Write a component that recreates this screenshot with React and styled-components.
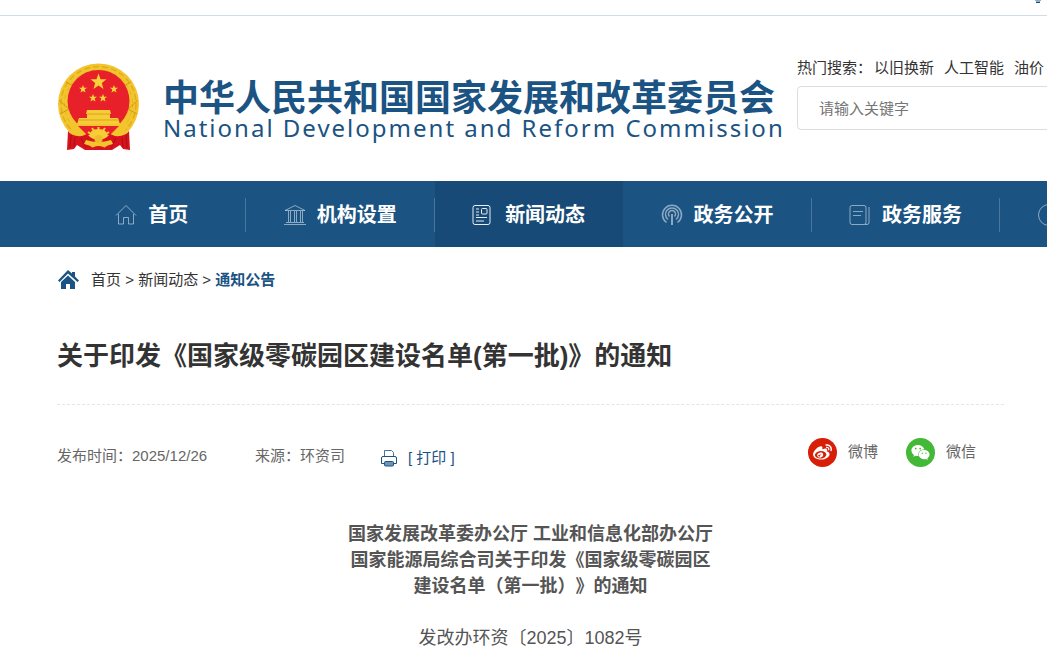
import React from 'react'
import styled, {createGlobalStyle} from "styled-components"
import {FaWeibo, FaWeixin} from "react-icons/fa"


const hotWords = ["以旧换新", "人工智能", "油价"]

const smallStars = [[26, 27], [57, 27], [36, 36], [46, 36]]

const Emblem = () => (
	<svg width="84" height="92" viewBox="0 0 84 92" role="img" aria-label="国徽">
		<circle cx="41.500" cy="42" r="40.500" fill="#f3c52c"/>
		<circle cx="41.500" cy="42" r="37.500" fill="none" stroke="#dfac22" strokeWidth="1.500" strokeDasharray="6 3"/>
		<circle cx="41.500" cy="42" r="34" fill="none" stroke="#e2b32a" strokeDasharray="4 4"/>
		<path d="M2 38 L13 48 M3 52 L12 47 M81 38 L70 48 M80 52 L71 47 M9 20 L18 25 M74 20 L65 25" stroke="#cf981c"/>
		<circle cx="41.500" cy="39" r="31" fill="#e8202a"/>
		<path fill="#f7d23a" d="M41.500 11.500 L43.500 17.200 L49.500 17.300 L44.800 21 L46.500 27 L41.500 23.500 L36.500 27 L38.200 21 L33.500 17.300 L39.500 17.200Z"/>
		{smallStars.map(([x, y]) => (
			<path key={`${x}-${y}`} transform={`translate(${x} ${y})`} fill="#f7d23a" d="M0 -4 L1.100 -1.300 L4 -1.200 L1.700 .6 L2.500 3.500 L0 1.900 L-2.500 3.500 L-1.700 .6 L-4 -1.200 L-1.100 -1.300Z"/>
		))}
		<path fill="#f6cd36" d="M30 48h23l1 4h-1v4h8l2 6H20l2-6h8v-4h-1z"/>
		<path stroke="#d9a322" d="M30 52h23M21 58h41"/>
		<path fill="#f3c52c" d="M13 62h57l-3 14H16z"/>
		<path fill="#e8202a" d="M21 64h41l-9 9H30z"/>
		<path fill="#f6cd36" d="M32 76q0-9 9.500-9t9.500 9z"/>
		<path stroke="#f6cd36" strokeWidth="2" d="M31 70l3 2M35 66l2 3M41.500 65v3M48 66l-2 3M52 70l-3 2"/>
		<path fill="#d8131d" d="M11 69q4 6 14 5l5-2q5 6 11.500 6t11.500-6l5 2q10 1 14-5l1 19-7-1-3-4-8 5H28l-8-5-3 4-7 1z"/>
		<path stroke="#a90f18" fill="none" d="M14 73l-1 13M18 75l-1 10M69 73l1 13M65 75l1 10M24 76l5 10M59 76l-5 10"/>
		<path fill="#f3c52c" d="M29 78q12.500 4 25 0l2 4q-6 1-9 4H36q-3-3-9-4z"/>
		<path fill="#d8131d" d="M32 88q9.500-8 19 0z"/>
		<circle cx="41.500" cy="77" r="4" fill="#efbd2b"/>
	</svg>
)

const HomeLineIcon = () => (
	<NavSvg>
		<path d="M1 11.500 L11 1.500 L21 11.500 M3.500 10v10h5v-6.500h5V20h5V10"/>
	</NavSvg>
)

const BankIcon = () => (
	<NavSvg>
		<path d="M1 6.500 L11 1.500 L21 6.500zM0 20.500h22M2 18.500h18M4.500 7v11M6.500 7v11M10.500 7v11M12.500 7v11M16.500 7v11M18.500 7v11"/>
	</NavSvg>
)

const NewsIcon = () => (
	<NavSvg $bright>
		<rect x="1" y="1.500" width="17" height="19" rx="2"/>
		<rect x="9.500" y="4.500" width="5.500" height="5.500" rx="1"/>
		<path d="M4 5h3M4 8h3M4 11h3M4 13.500h11M4 17h8"/>
	</NavSvg>
)

const SignalIcon = () => (
	<NavSvg>
		<path strokeWidth="1.500" d="M5.500 18.500a9.500 9.500 0 1 1 11 0M7 15.500a6.500 6.500 0 1 1 8 0M8.500 12.500a3.500 3.500 0 1 1 5 0"/>
		<path strokeWidth="2" d="M11 10v11"/>
	</NavSvg>
)

const PaperIcon = () => (
	<NavSvg>
		<rect x="1" y="1.500" width="16" height="19" rx="2"/>
		<path d="M4 7.500h10M4 11.500h8M16 20.500h2q2 0 2-2V3"/>
	</NavSvg>
)

const ChatIcon = () => (
	<NavSvg>
		<circle cx="11" cy="11" r="10.500"/>
	</NavSvg>
)

const navItems = [
	{title: "首页", icon: <HomeLineIcon/>},
	{title: "机构设置", icon: <BankIcon/>},
	{title: "新闻动态", icon: <NewsIcon/>, active: true},
	{title: "政务公开", icon: <SignalIcon/>},
	{title: "政务服务", icon: <PaperIcon/>},
	{title: "互动交流", icon: <ChatIcon/>, iconOnly: true},
]

function NavSvg({children, $bright}) {
	return (
		<svg width="22" height="22" viewBox="0 0 22 22" fill="none" stroke="#fff" strokeOpacity={$bright ? .9 : .5} aria-hidden="true">
			{children}
		</svg>
	)
}

const App = () => {
	return (
		<>
			<GlobalStyle/>
			<TopBar>
				<svg width="6" height="3" viewBox="0 0 6 3" aria-hidden="true">
					<path d="M0 0h6v1H0z" fill="#8fafc9"/>
					<path d="M1 1.500h4V3H1z" fill="#1b5383"/>
				</svg>
			</TopBar>
			<Header>
				<Logo href="#">
					<Emblem/>
					<LogoText>
						<strong>中华人民共和国国家发展和改革委员会</strong>
						<span lang="en">National Development and Reform Commission</span>
					</LogoText>
				</Logo>
				<Search>
					<HotWords>
						<span>热门搜索：</span>
						{hotWords.map((word) => <a href="#" key={word}>{word}</a>)}
					</HotWords>
					<input type="text" placeholder="请输入关键字" aria-label="请输入关键字"/>
				</Search>
			</Header>
			<Nav>
				<ul>
					{navItems.map(({title, icon, active, iconOnly}) => (
						<NavItem key={title} $active={active} $iconOnly={iconOnly}>
							<a href="#" aria-label={title}>{icon}{!iconOnly && <span>{title}</span>}</a>
						</NavItem>
					))}
				</ul>
			</Nav>
			<Main>
				<Breadcrumb>
					<svg width="22" height="20" viewBox="0 0 22 20" fill="#1b5383" aria-hidden="true">
						<path d="M11 0 L15 3.500V2h3v4.500l4 4-1.500 1.500L11 3.500 2.500 12 1 10.500z"/>
						<path d="M4 12 L11 5.500l7 6.500v7h-5v-5H9v5H4z"/>
					</svg>
					<p>
						<a href="#">首页</a> &gt; <a href="#">新闻动态</a> &gt; <a href="#" className="current">通知公告</a>
					</p>
				</Breadcrumb>
				<Title>关于印发《国家级零碳园区建设名单(第一批)》的通知</Title>
				<Meta>
					<Published>发布时间：2025/12/26</Published>
					<span>来源：环资司</span>
					<PrintButton type="button">
						<svg width="18" height="18" viewBox="0 0 18 18" fill="none" stroke="#1b5383" aria-hidden="true">
							<path d="M4.500 8V1.500h7l2 2V8" strokeOpacity=".8"/>
							<path d="M4 14.500H1.500V9q0-1.500 1.500-1.500h12q1.500 0 1.500 1.500v5.500H14"/>
							<rect x="4.500" y="12.500" width="9" height="4.500" rx="1" fill="#6f93b3"/>
						</svg>
						<span>[ 打印 ]</span>
					</PrintButton>
					<Share>
						<ShareLink href="#" $color="#d81e06">
							<i><FaWeibo/></i>微博
						</ShareLink>
						<ShareLink href="#" $color="#44b837">
							<i><FaWeixin/></i>微信
						</ShareLink>
					</Share>
				</Meta>
				<Article>
					<h2>
						国家发展改革委办公厅 工业和信息化部办公厅<br/>
						国家能源局综合司关于印发《国家级零碳园区<br/>
						建设名单（第一批）》的通知
					</h2>
					<p>发改办环资〔2025〕1082号</p>
				</Article>
			</Main>
		</>
	)
}

export default App

const GlobalStyle = createGlobalStyle`
  * {
    box-sizing: border-box;
    margin: 0;
    padding: 0;
  }

  body {
    background: #fff;
    color: #333;
    font-family: "Liberation Sans", "Noto Sans CJK SC", sans-serif;
    font-size: 15px;
    line-height: 24px;
    text-spacing-trim: space-all;
    overflow-x: hidden;
  }

  a {
    color: inherit;
    text-decoration: none;
  }

  svg {
    display: block;
    flex: none;
  }
`

const TopBar = styled.div`
  display: flex;
  justify-content: flex-end;
  height: 16px;
  padding-right: 6px;
  border-bottom: 1px solid #d1dde6;
`

const Header = styled.header`
  display: flex;
  gap: 20px;
  height: 165px;
  padding-left: 57px;
  overflow: hidden;
`

const Logo = styled.a`
  display: flex;
  flex: none;
  gap: 22px;
  padding-top: 46px;
  color: #1b5383;
`

const LogoText = styled.div`
  display: flex;
  flex-direction: column;
  width: 614px;
  padding-top: 20px;
  white-space: nowrap;

  strong {
    font-size: 36px;
    line-height: 34px;
  }

  span {
    font-family: "Noto Sans", sans-serif;
    font-size: 24px;
    line-height: 24px;
    letter-spacing: 2px;
  }
`

const Search = styled.div`
  flex: 1 0 320px;
  padding-top: 40px;

  input {
    width: 100%;
    height: 44px;
    margin-top: 6px;
    padding: 0 21px;
    border: 1px solid #ddd;
    border-radius: 4px;
    font: inherit;
  }

  input::placeholder {
    color: #757575;
  }
`

const HotWords = styled.div`
  display: flex;
  gap: 10px;
  white-space: nowrap;

  span {
    margin-right: -8px;
  }
`

const Nav = styled.nav`
  background: #1b5383;
  padding-left: 58px;
  overflow: hidden;

  ul {
    display: grid;
    grid-template-columns: repeat(6, 18vw);
    list-style: none;
  }
`

const NavItem = styled.li`
  padding: 17px 0 15px;
  background: ${({$active}) => $active ? "#174a76" : "transparent"};

  a {
    display: flex;
    align-items: center;
    justify-content: ${({$iconOnly}) => $iconOnly ? "flex-start" : "center"};
    gap: 11px;
    height: 34px;
    padding-left: ${({$iconOnly}) => $iconOnly ? "38px" : "0"};
    border-right: 1px solid ${({$active}) => $active ? "transparent" : "#4a769c"};
    color: #fff;
    font-size: 20px;
    font-weight: bold;
    white-space: nowrap;
  }
`

const Main = styled.main`
  padding: 20px 43px 0 57px;
`

const Breadcrumb = styled.div`
  display: flex;
  align-items: center;
  gap: 12px;
  height: 26px;

  .current {
    color: #1b5383;
    font-weight: bold;
  }
`

const Title = styled.h1`
  padding: 43px 0 28px;
  border-bottom: 1px dashed #e5e5e5;
  font-size: 26px;
  line-height: 40px;
`

const Meta = styled.div`
  display: flex;
  align-items: center;
  height: 40px;
  margin-top: 31px;
  color: #666;
`

const Published = styled.span`
  width: 198px;
`

const PrintButton = styled.button`
  display: flex;
  align-items: center;
  gap: 10px;
  margin-left: 35px;
  padding-top: 3px;
  border: none;
  background: none;
  color: #1b5383;
  font: inherit;
  cursor: pointer;
`

const Share = styled.div`
  display: flex;
  gap: 28px;
  margin-left: auto;
  padding: 0 28px 8px 0;
`

const ShareLink = styled.a`
  display: flex;
  align-items: center;
  gap: 11px;

  i {
    display: flex;
    align-items: center;
    justify-content: center;
    width: 29px;
    height: 29px;
    border-radius: 50%;
    background: ${({$color}) => $color};
    color: #fff;
    font-size: 19px;
  }
`

const Article = styled.article`
  margin-top: 45px;
  color: #555;
  font-size: 18px;
  line-height: 26px;
  text-align: center;

  h2 {
    font-size: 18px;
  }

  p {
    margin-top: 26px;
  }
`
